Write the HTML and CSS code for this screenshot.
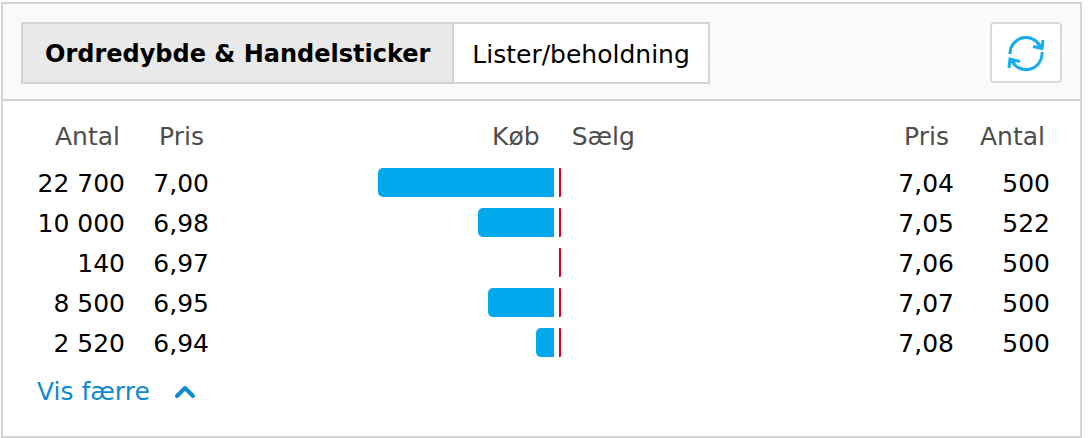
FILE: index.html
```html
<!DOCTYPE html>
<html lang="da">
<head>
  <meta charset="UTF-8" />
  <meta name="viewport" content="width=device-width, initial-scale=1.0"/>
  <title>Ordredybde</title>
  <link rel="stylesheet" href="styles.css">
</head>
<body>

<div class="panel">
  <header class="panel-header">
    <div class="tabs" role="tablist">
      <button class="tab active" type="button" role="tab" aria-selected="true">Ordredybde &amp; Handelsticker</button>
      <button class="tab" type="button" role="tab" aria-selected="false">Lister/beholdning</button>
    </div>
    <button class="refresh" type="button" aria-label="Opdater">
      <svg width="40" height="40" viewBox="0 0 40 40" fill="none" stroke="#16adee" stroke-width="3">
        <path d="M4 21A16 16 0 0 1 35 15"/>
        <path d="M37 7L36 15.500L27 13.500"/>
        <path d="M31 10L36 15"/>
        <path d="M36 19A16 16 0 0 1 5 26"/>
        <path d="M3 35L4 26L14 28.500"/>
        <path d="M9 31L4 26"/>
      </svg>
    </button>
  </header>

  <table class="depth">
    <colgroup>
      <col class="col-amount">
      <col class="col-price">
      <col class="col-buy">
      <col>
      <col class="col-price">
      <col class="col-amount-last">
    </colgroup>
    <thead>
      <tr>
        <th>Antal</th>
        <th>Pris</th>
        <th class="buy">Køb</th>
        <th class="sell">Sælg</th>
        <th>Pris</th>
        <th class="last">Antal</th>
      </tr>
    </thead>
    <tbody>
      <tr>
        <td>22 700</td>
        <td>7,00</td>
        <td class="buy"><div class="bar" style="width: 51%"></div></td>
        <td class="sell"><div class="bar" style="width: 0.5%"></div></td>
        <td>7,04</td>
        <td class="last">500</td>
      </tr>
      <tr>
        <td>10 000</td>
        <td>6,98</td>
        <td class="buy"><div class="bar" style="width: 22%"></div></td>
        <td class="sell"><div class="bar" style="width: 0.5%"></div></td>
        <td>7,05</td>
        <td class="last">522</td>
      </tr>
      <tr>
        <td>140</td>
        <td>6,97</td>
        <td class="buy"><div class="bar" style="width: 0%"></div></td>
        <td class="sell"><div class="bar" style="width: 0.5%"></div></td>
        <td>7,06</td>
        <td class="last">500</td>
      </tr>
      <tr>
        <td>8 500</td>
        <td>6,95</td>
        <td class="buy"><div class="bar" style="width: 19%"></div></td>
        <td class="sell"><div class="bar" style="width: 0.5%"></div></td>
        <td>7,07</td>
        <td class="last">500</td>
      </tr>
      <tr>
        <td>2 520</td>
        <td>6,94</td>
        <td class="buy"><div class="bar" style="width: 5%"></div></td>
        <td class="sell"><div class="bar" style="width: 0.5%"></div></td>
        <td>7,08</td>
        <td class="last">500</td>
      </tr>
    </tbody>
  </table>

  <a class="toggle" href="#">
    Vis færre
    <svg width="22" height="16" viewBox="0 0 22 16" fill="none" stroke="#0c8bd0" stroke-width="4" stroke-linecap="round" stroke-linejoin="round">
      <path d="M3 12l8-8 8 8"/>
    </svg>
  </a>
</div>

</body>
</html>
```
FILE: styles.css
```css
body {
  font-family: Verdana, "DejaVu Sans", sans-serif;
  font-size: 25px;
  margin: 2px 6px 0 1px;
  background: #fff;
  color: #000;
}

.panel {
  border: 2px solid #d4d4d4;
}

.panel-header {
  display: flex;
  justify-content: space-between;
  align-items: flex-start;
  padding: 18px 18px 15px;
  background: #fafafa;
  border-bottom: 2px solid #d4d4d4;
}

.tabs {
  display: flex;
}

button {
  font-family: inherit;
  font-size: inherit;
  color: inherit;
  background: #fff;
  cursor: pointer;
}

.tab {
  height: 62px;
  padding: 2px 18px 0;
  border: 2px solid #d4d4d4;
}

.tab + .tab {
  border-left: none;
}

.tab.active {
  padding: 2px 22px 0;
  background: #e9e9e9;
  font-size: 24px;
  font-weight: bold;
}

.refresh {
  display: flex;
  align-items: center;
  justify-content: center;
  width: 72px;
  height: 61px;
  padding: 0;
  border: 2px solid #d9d9d9;
  border-radius: 4px;
}

.depth {
  width: 100%;
  margin-top: 16px;
  table-layout: fixed;
  border-collapse: collapse;
}

.col-amount {
  width: 122px;
}

.col-price {
  width: 84px;
}

.col-buy {
  width: 32%;
}

.col-amount-last {
  width: 126px;
}

th, td {
  height: 40px;
  padding: 0;
  text-align: right;
  white-space: nowrap;
}

th {
  height: 38px;
  padding: 0 5px 8px 0;
  font-weight: normal;
  color: #4d4d4d;
}

th.buy {
  padding-right: 14px;
}

th.sell {
  padding-left: 18px;
  text-align: left;
}

th.last {
  padding-right: 35px;
}

td.last {
  padding-right: 30px;
}

td.sell {
  padding-left: 5px;
}

.bar {
  height: 29px;
  margin-bottom: 2px;
}

.buy .bar {
  margin-left: auto;
  background: #00a9ec;
  border-radius: 5px 0 0 5px;
}

.sell .bar {
  min-width: 2px;
  background: #d9002b;
  border-radius: 0 1px 1px 0;
}

.toggle {
  display: inline-flex;
  align-items: center;
  gap: 24px;
  padding: 14px 0 30px 34px;
  color: #0c8bd0;
  text-decoration: none;
}
```
